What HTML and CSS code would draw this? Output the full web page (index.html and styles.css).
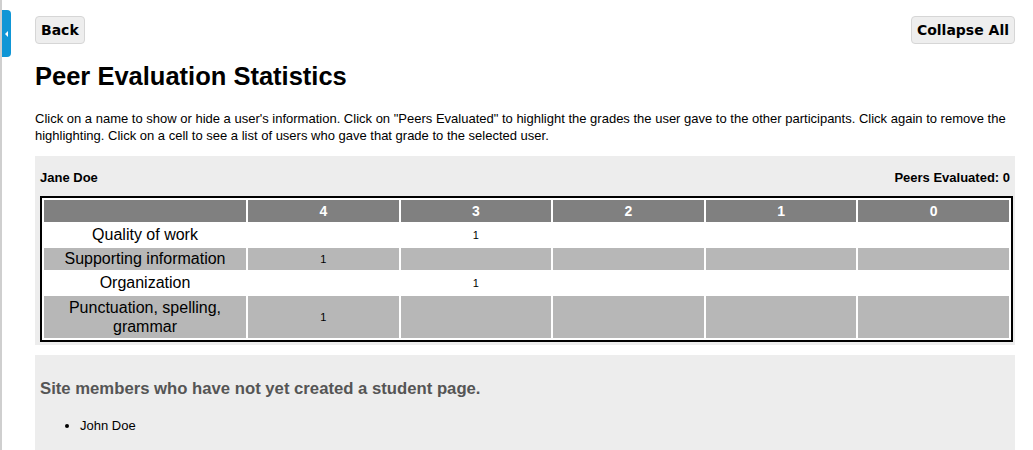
FILE: index.html
```html
<!DOCTYPE html>
<html>
<head>
<meta charset="utf-8">
<link rel="stylesheet" href="styles.css">
</head>
<body>
<div class="sidebar-edge"><div class="tab"><span class="tri"></span></div></div>
<main class="page">
  <div class="toolbar">
    <button class="btn">Back</button>
    <button class="btn">Collapse All</button>
  </div>
  <h1 class="title">Peer Evaluation Statistics</h1>
  <p class="intro">Click on a name to show or hide a user's information. Click on "Peers Evaluated" to highlight the grades the user gave to the other participants. Click again to remove the highlighting. Click on a cell to see a list of users who gave that grade to the selected user.</p>

  <section class="user-box">
    <div class="user-head">
      <span class="user-name">Jane Doe</span>
      <span class="peers">Peers Evaluated: 0</span>
    </div>
    <table class="grades">
      <thead>
        <tr><th class="first"></th><th>4</th><th>3</th><th>2</th><th>1</th><th>0</th></tr>
      </thead>
      <tbody>
        <tr class="light"><td class="label">Quality of work</td><td></td><td class="num">1</td><td></td><td></td><td></td></tr>
        <tr class="dark"><td class="label">Supporting information</td><td class="num">1</td><td></td><td></td><td></td><td></td></tr>
        <tr class="light"><td class="label">Organization</td><td></td><td class="num">1</td><td></td><td></td><td></td></tr>
        <tr class="dark tall"><td class="label">Punctuation, spelling,<br>grammar</td><td class="num">1</td><td></td><td></td><td></td><td></td></tr>
      </tbody>
    </table>
  </section>

  <section class="members-box">
    <h2 class="members-title">Site members who have not yet created a student page.</h2>
    <ul class="members">
      <li>John Doe</li>
    </ul>
  </section>
</main>
</body>
</html>
```

FILE: styles.css
```css
html, body {
  margin: 0;
  padding: 0;
  background: #fff;
  font-family: "Liberation Sans", Arial, sans-serif;
  color: #000;
  overflow: hidden;
}

.sidebar-edge {
  position: fixed;
  left: 0;
  top: 0;
  bottom: 0;
  width: 2px;
  background: #cfcfcf;
}

.tab {
  position: absolute;
  left: 2px;
  top: 10px;
  width: 9px;
  height: 47px;
  background: #0f96d6;
  border-radius: 0 4px 4px 0;
}

.tri {
  position: absolute;
  left: 3px;
  top: 21px;
  width: 0;
  height: 0;
  border-top: 3px solid transparent;
  border-bottom: 3px solid transparent;
  border-right: 3px solid #fff;
}

.page {
  padding: 16px 18px 0 35px;
}

.toolbar {
  display: flex;
  justify-content: space-between;
  align-items: center;
}

.btn {
  font-family: "DejaVu Sans", Verdana, sans-serif;
  font-weight: bold;
  font-size: 14px;
  color: #000;
  background: #eeeeee;
  border: 1px solid #d6d6d6;
  border-radius: 4px;
  height: 28px;
  padding: 0 5px;
  margin: 0;
  line-height: 26px;
}

.title {
  margin: 18px 0 0;
  font-size: 25.5px;
  line-height: 28px;
  font-weight: bold;
}

.intro {
  margin: 20px 0 0;
  font-size: 13px;
  line-height: 17px;
}

.user-box {
  margin-top: 12px;
  background: #ededed;
  padding: 14px 2px 3px 5px;
}

.user-head {
  display: flex;
  justify-content: space-between;
  font-size: 13px;
  font-weight: bold;
  line-height: 16px;
  padding-right: 3px;
}

.grades {
  margin-top: 10px;
  width: 973px;
  border: 2px solid #000;
  border-spacing: 2px;
  background: #fff;
  table-layout: fixed;
}

.grades th {
  background: #808080;
  color: #fff;
  font-size: 14px;
  font-weight: bold;
  line-height: 18px;
  padding: 2px 0;
  text-align: center;
  vertical-align: middle;
}

.grades th.first {
  width: 202px;
}

.grades td {
  padding: 2px 0;
  text-align: center;
  vertical-align: middle;
  font-size: 16px;
  line-height: 18px;
}

.grades tr.tall td {
  line-height: 19px;
}

.grades td.num {
  font-size: 11px;
  color: #000;
}

.grades tr.dark td {
  background: #b7b7b7;
}

.members-box {
  margin-top: 10px;
  background: #ededed;
  padding: 24px 5px 20px;
  min-height: 80px;
}

.members-title {
  margin: 0;
  font-size: 16.7px;
  line-height: 19px;
  font-weight: bold;
  color: #555;
}

.members {
  margin: 20px 0 0;
  padding-left: 40px;
  font-size: 13px;
  line-height: 16px;
}
```
